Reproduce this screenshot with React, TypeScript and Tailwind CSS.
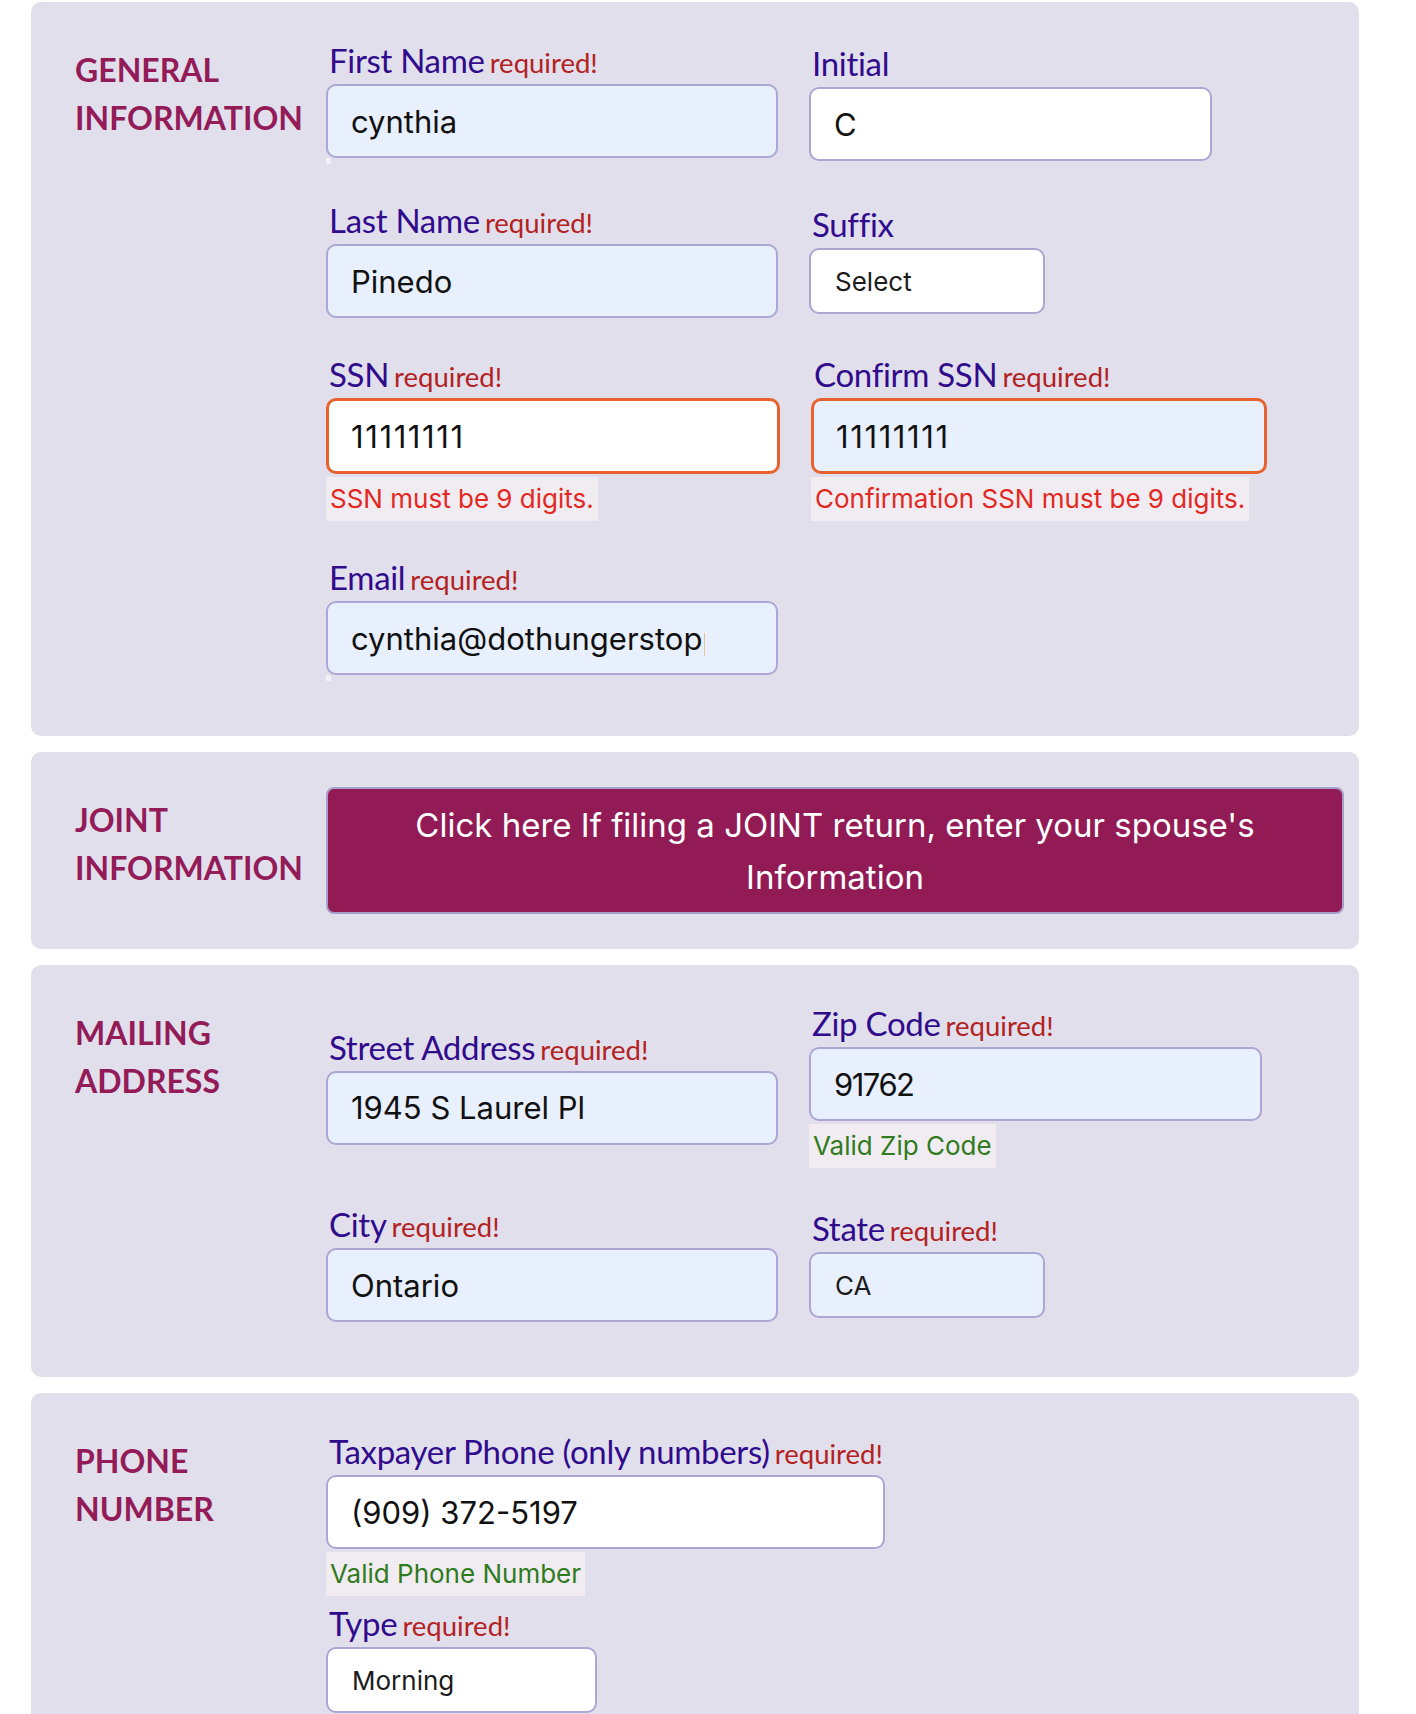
import type { ReactNode } from "react";

type FieldProps = {
  label: string;
  required?: boolean;
  value: string;
  width: string;
  filled?: boolean;
  error?: boolean;
  select?: boolean;
  message?: { text: string; kind: "error" | "ok" };
  speck?: boolean;
  inputClass?: string;
};

function FieldLabel({ text, required }: { text: string; required?: boolean }) {
  return (
    <div className="flex items-baseline h-[40px] mb-[4px] pl-[3px] whitespace-nowrap">
      <span className="text-[33px] leading-[40px] text-[#300b8c] tracking-[-0.3px]">
        {text}
      </span>
      {required && (
        <span className="ml-[5px] text-[27.5px] leading-[40px] text-[#b3221f]">
          required!
        </span>
      )}
    </div>
  );
}

function Field({
  label,
  required,
  value,
  width,
  filled,
  error,
  select,
  message,
  speck,
  inputClass = "",
}: FieldProps) {
  const bg = filled ? "bg-[#e8effd]" : "bg-white";
  const border = error
    ? "border-[3px] border-[#e9612f] h-[76px]"
    : select
      ? "border-2 border-[#ada5d3] h-[66px]"
      : "border-2 border-[#ada5d3] h-[74px]";

  return (
    <div className={`flex flex-col ${width}`}>
      <FieldLabel text={label} required={required} />
      {select ? (
        <select
          defaultValue={value}
          className={`appearance-none w-full rounded-[10px] ${border} ${bg} pl-[24px] text-[26px] text-[#1c1c1c] outline-none font-['Inter',sans-serif]`}
        >
          <option>{value}</option>
        </select>
      ) : (
        <input
          readOnly
          defaultValue={value}
          className={`w-full rounded-[10px] ${border} ${bg} ${error ? "pl-[22px]" : "pl-[23px]"} text-[31px] text-[#111] outline-none font-['Inter',sans-serif] ${inputClass}`}
        />
      )}
      {speck && <div className="w-[5px] h-[6px] bg-[#f3f1f8]" />}
      {message && (
        <div
          className={`self-start mt-[3px] h-[44px] px-[4px] leading-[44px] text-[26px] bg-[#f1ecf1] font-['Inter',sans-serif] ${
            message.kind === "error" ? "text-[#e2281f]" : "text-[#2f7b1d]"
          }`}
        >
          {message.text}
        </div>
      )}
    </div>
  );
}

function Card({
  title,
  children,
  compact,
}: {
  title: [string, string];
  children: ReactNode;
  compact?: boolean;
}) {
  return (
    <section
      className={`flex rounded-[10px] bg-[#e1dfec] pl-[44px] pr-[15px] ${
        compact ? "pt-[35px] pb-[35px]" : "pt-[38px] pb-[55px]"
      }`}
    >
      <h2
        className={`w-[251px] shrink-0 text-[32px] leading-[48px] font-bold text-[#921b58] ${
          compact ? "mt-[9px]" : "mt-[6px]"
        }`}
      >
        {title[0]}
        <br />
        {title[1]}
      </h2>
      {children}
    </section>
  );
}

export default function App() {
  return (
    <div className="min-h-screen bg-white pt-[2px] pb-[40px] font-['Lato',sans-serif]">
      <div className="ml-[31px] w-[1328px] flex flex-col gap-[16px]">
        {/* General information */}
        <Card title={["GENERAL", "INFORMATION"]}>
          <div className="flex flex-col gap-[36px]">
            <div className="flex items-center gap-[31px]">
              <Field label="First Name" required value="cynthia" width="w-[452px]" filled speck />
              <Field label="Initial" value="C" width="w-[403px]" />
            </div>
            <div className="flex items-center gap-[31px]">
              <Field label="Last Name" required value="Pinedo" width="w-[452px]" filled />
              <Field label="Suffix" value="Select" width="w-[236px]" select />
            </div>
            <div className="flex items-center gap-[31px]">
              <Field
                label="SSN"
                required
                value="11111111"
                width="w-[454px]"
                error
                inputClass="tracking-[1.6px]"
                message={{ text: "SSN must be 9 digits.", kind: "error" }}
              />
              <Field
                label="Confirm SSN"
                required
                value="11111111"
                width="w-[456px]"
                filled
                error
                inputClass="tracking-[1.6px]"
                message={{ text: "Confirmation SSN must be 9 digits.", kind: "error" }}
              />
            </div>
            <div className="flex items-center gap-[31px]">
              <Field
                label="Email"
                required
                value="cynthia@dothungerstoppers.org"
                width="w-[452px]"
                filled
                speck
                inputClass="pr-[71px]"
              />
            </div>
          </div>
        </Card>

        {/* Joint information */}
        <Card title={["JOINT", "INFORMATION"]} compact>
          <button className="w-[1018px] h-[127px] rounded-[8px] border-2 border-[#a79dcb] bg-[#921b56] px-[40px] text-[33px] leading-[52px] text-white font-['Inter',sans-serif]">
            Click here If filing a JOINT return, enter your spouse's Information
          </button>
        </Card>

        {/* Mailing address */}
        <Card title={["MAILING", "ADDRESS"]}>
          <div className="flex flex-col gap-[36px]">
            <div className="flex items-center gap-[31px]">
              <Field label="Street Address" required value="1945 S Laurel Pl" width="w-[452px]" filled />
              <Field
                label="Zip Code"
                required
                value="91762"
                width="w-[453px]"
                filled
                inputClass="tracking-[-1.5px]"
                message={{ text: "Valid Zip Code", kind: "ok" }}
              />
            </div>
            <div className="flex items-center gap-[31px]">
              <Field label="City" required value="Ontario" width="w-[452px]" filled />
              <Field label="State" required value="CA" width="w-[236px]" select filled />
            </div>
          </div>
        </Card>

        {/* Phone number */}
        <Card title={["PHONE", "NUMBER"]}>
          <div className="flex flex-col gap-[7px]">
            <Field
              label="Taxpayer Phone (only numbers)"
              required
              value="(909) 372-5197"
              width="w-[559px]"
              message={{ text: "Valid Phone Number", kind: "ok" }}
            />
            <Field label="Type" required value="Morning" width="w-[271px]" select />
          </div>
        </Card>
      </div>
    </div>
  );
}
